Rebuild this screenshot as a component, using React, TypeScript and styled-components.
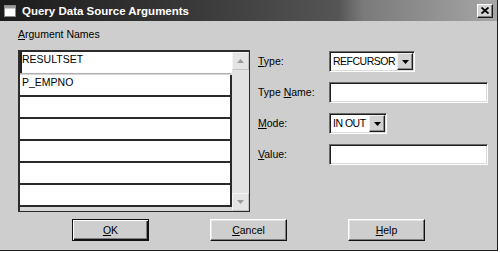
import styled, { createGlobalStyle } from 'styled-components'

const GlobalStyle = createGlobalStyle`
  html, body {
    margin: 0;
    padding: 0;
    background: #ffffff;
  }
  body {
    font-family: 'Liberation Sans', Arial, sans-serif;
    font-size: 10.5px;
    color: #000;
  }
`

const Window = styled.div`
  width: 498px;
  height: 251px;
  box-sizing: border-box;
  background: #cecece;
  border-right: 1px solid #1e1e1e;
  border-bottom: 1px solid #1e1e1e;
  display: flex;
  flex-direction: column;
`

const TitleBar = styled.div`
  height: 21px;
  flex: none;
  display: flex;
  align-items: center;
  gap: 6px;
  padding: 0 4px 0 4px;
  background: linear-gradient(
    to right,
    #1b1b1b 0%,
    #3a3a3a 40%,
    #555555 68%,
    #7a7a7a 73%,
    #a6a6a6 100%
  );
`

const Title = styled.span`
  flex: 1;
  color: #ffffff;
  font-weight: bold;
  font-size: 11.5px;
  white-space: nowrap;
`

const CloseButton = styled.div`
  width: 16px;
  height: 14px;
  box-sizing: border-box;
  display: flex;
  align-items: center;
  justify-content: center;
  background: #d4d4d4;
  border: 1px solid;
  border-color: #ffffff #1a1a1a #1a1a1a #ffffff;
  box-shadow: inset -1px -1px #808080;
`

const Body = styled.div`
  flex: 1;
  display: flex;
  flex-direction: column;
  padding-top: 7px;
`

const Main = styled.div`
  display: flex;
  gap: 8px;
  padding-left: 18px;
`

const ListColumn = styled.div`
  display: flex;
  flex-direction: column;
  gap: 9px;
  width: 232px;
`

const Label = styled.span`
  line-height: 13px;
  white-space: nowrap;
`

const ListBox = styled.div`
  height: 162px;
  box-sizing: border-box;
  display: flex;
  border-style: solid;
  border-color: #2c2c2c;
  border-width: 2px 1px 1px 2px;
`

const Rows = styled.div`
  flex: 1;
  display: flex;
  flex-direction: column;
  background: #d6d6d6;
`

const Row = styled.div<{ $current?: boolean }>`
  height: 22px;
  flex: none;
  box-sizing: border-box;
  background: #ffffff;
  padding: 1px 0 0 2px;
  line-height: 13px;
  border-bottom: ${({ $current }) => ($current ? '1px solid #b0b0b0' : '2px solid #2a2a2a')};
  border-right: 2px solid ${({ $current }) => ($current ? '#ffffff' : '#2a2a2a')};
  box-shadow: ${({ $current }) => ($current ? 'inset 2px 0 #222' : 'none')};
  margin-bottom: ${({ $current }) => ($current ? '1px' : '0')};
`

const ScrollBar = styled.div`
  width: 17px;
  flex: none;
  display: flex;
  flex-direction: column;
  justify-content: space-between;
  background: #e2e2e2;
`

const ScrollButton = styled.div`
  height: 16px;
  display: flex;
  align-items: center;
  justify-content: center;
  background: #e4e4e4;
  border: 1px solid;
  border-color: #f4f4f4 #c4c4c4 #c4c4c4 #f4f4f4;
`

const FormColumn = styled.div`
  padding-top: 23px;
  display: grid;
  grid-template-columns: 71px auto;
  grid-auto-rows: 21px;
  row-gap: 10px;
  align-items: center;
`

const Field = styled.div<{ $width: number }>`
  width: ${({ $width }) => $width}px;
  height: 21px;
  box-sizing: border-box;
  display: flex;
  align-items: stretch;
  background: #ffffff;
  border: 1px solid;
  border-color: #6a6a6a #ffffff #ffffff #6a6a6a;
  box-shadow: inset 1px 1px #1e1e1e, inset -1px -1px #dadada;
  padding: 1px;
`

const FieldText = styled.span`
  flex: 1;
  padding-left: 2px;
  line-height: 17px;
  letter-spacing: -0.5px;
  white-space: nowrap;
  overflow: hidden;
`

const DropButton = styled.div`
  width: 16px;
  flex: none;
  box-sizing: border-box;
  display: flex;
  align-items: center;
  justify-content: center;
  background: #d2d2d2;
  border: 1px solid;
  border-color: #f0f0f0 #1e1e1e #1e1e1e #f0f0f0;
  box-shadow: inset -1px -1px #8a8a8a;
`

const ButtonRow = styled.div`
  display: flex;
  justify-content: center;
  gap: 61px;
  margin-top: 7px;
`

const Button = styled.div<{ $default?: boolean }>`
  width: 77px;
  height: 22px;
  box-sizing: border-box;
  display: flex;
  align-items: center;
  justify-content: center;
  background: #cecece;
  border: 1px solid;
  border-color: ${({ $default }) => ($default ? '#111' : '#ffffff #111 #111 #ffffff')};
  box-shadow: ${({ $default }) =>
    $default
      ? 'inset 1px 1px #ffffff, inset -1px -1px #111, inset -2px -2px #808080'
      : 'inset -1px -1px #808080, inset 1px 1px #e4e4e4'};
`

const Arrow = ({ dir, color }: { dir: 'up' | 'down'; color: string }) => (
  <svg width="7" height="4" viewBox="0 0 7 4">
    <path d={dir === 'up' ? 'M3.5 0 L7 4 L0 4 Z' : 'M0 0 L7 0 L3.5 4 Z'} fill={color} />
  </svg>
)

const WindowIcon = () => (
  <svg width="12" height="12" viewBox="0 0 12 12">
    <rect x="0.5" y="0.5" width="11" height="11" fill="#ffffff" stroke="#8a8a8a" />
    <rect x="1" y="1" width="10" height="2.5" fill="#9a9a9a" />
  </svg>
)

const CloseIcon = () => (
  <svg width="8" height="7" viewBox="0 0 8 7">
    <path d="M0.5 0.5 L7.5 6.5 M7.5 0.5 L0.5 6.5" stroke="#000" strokeWidth="1.8" />
  </svg>
)

const rows = ['RESULTSET', 'P_EMPNO', '', '', '', '', '']

export default function App() {
  return (
    <>
      <GlobalStyle />
      <Window>
        <TitleBar>
          <WindowIcon />
          <Title>Query Data Source Arguments</Title>
          <CloseButton>
            <CloseIcon />
          </CloseButton>
        </TitleBar>
        <Body>
          <Main>
            <ListColumn>
              <Label>
                <u>A</u>rgument Names
              </Label>
              <ListBox>
                <Rows>
                  {rows.map((name, i) => (
                    <Row key={i} $current={i === 0}>
                      {name}
                    </Row>
                  ))}
                </Rows>
                <ScrollBar>
                  <ScrollButton>
                    <Arrow dir="up" color="#9a9a9a" />
                  </ScrollButton>
                  <ScrollButton>
                    <Arrow dir="down" color="#9a9a9a" />
                  </ScrollButton>
                </ScrollBar>
              </ListBox>
            </ListColumn>
            <FormColumn>
              <Label>
                <u>T</u>ype:
              </Label>
              <Field $width={86}>
                <FieldText>REFCURSOR</FieldText>
                <DropButton>
                  <Arrow dir="down" color="#000" />
                </DropButton>
              </Field>
              <Label>
                Type <u>N</u>ame:
              </Label>
              <Field $width={159} />
              <Label>
                <u>M</u>ode:
              </Label>
              <Field $width={58}>
                <FieldText>IN OUT</FieldText>
                <DropButton>
                  <Arrow dir="down" color="#000" />
                </DropButton>
              </Field>
              <Label>
                <u>V</u>alue:
              </Label>
              <Field $width={159} />
            </FormColumn>
          </Main>
          <ButtonRow>
            <Button $default>
              <u>O</u>K
            </Button>
            <Button>
              <u>C</u>ancel
            </Button>
            <Button>
              <u>H</u>elp
            </Button>
          </ButtonRow>
        </Body>
      </Window>
    </>
  )
}
